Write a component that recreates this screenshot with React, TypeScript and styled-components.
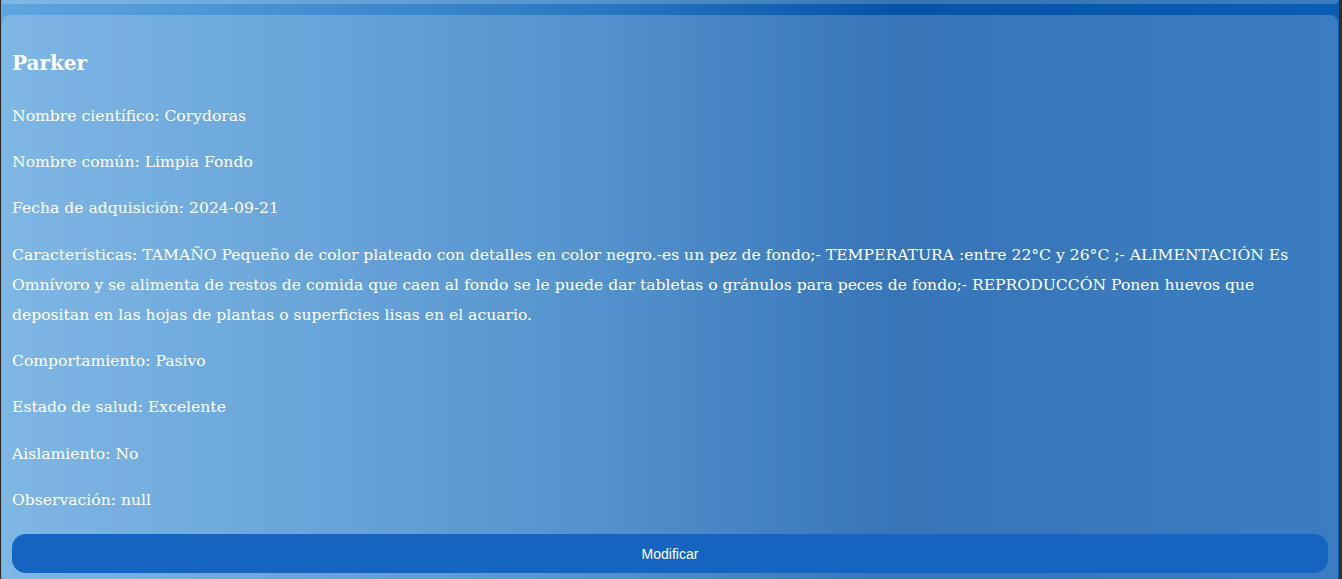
import React from "react";
import styled, { createGlobalStyle } from "styled-components";

const Global = createGlobalStyle`
  html, body { margin: 0; padding: 0; background: #2e2e2e; overflow: hidden; }
  body { font-family: "DejaVu Serif", Georgia, serif; }
`;

const Wrapper = styled.div`
  margin: 0 3px 0 1px;
  padding: 0 1px 0 1px;
  min-height: 579px;
  display: flex;
  flex-direction: column;
  gap: 11px;
  background: linear-gradient(90deg, #5fa5de 0%, #4690d2 22%, #2877c0 45%, #0553a6 67%, #0b5db2 100%);
`;

const Card = styled.section<{ $stub?: boolean }>`
  background: rgba(255, 255, 255, 0.2);
  border-radius: ${(p) => (p.$stub ? "0 0 8px 8px" : "8px")};
  height: ${(p) => (p.$stub ? "4px" : "auto")};
  padding: ${(p) => (p.$stub ? "0" : "36px 10px 12px 10px")};
  color: #fff;
`;

const Title = styled.h3`
  margin: 0 0 26px 0;
  font-size: 20px;
  line-height: 24px;
  font-weight: bold;
`;

const Field = styled.p`
  margin: 0 0 16px 0;
  font-size: 15.6px;
  line-height: 30.2px;
`;

const Button = styled.button`
  display: block;
  width: 100%;
  height: 39px;
  margin-top: 19px;
  border: none;
  border-radius: 14px;
  background: #1565c0;
  color: #fff;
  font-family: "Liberation Sans", Arial, sans-serif;
  font-size: 14px;
  cursor: pointer;
`;

const fields = [
  "Nombre científico: Corydoras",
  "Nombre común: Limpia Fondo",
  "Fecha de adquisición: 2024-09-21",
  "Características: TAMAÑO Pequeño de color plateado con detalles en color negro.-es un pez de fondo;- TEMPERATURA :entre 22°C y 26°C ;- ALIMENTACIÓN Es Omnívoro y se alimenta de restos de comida que caen al fondo se le puede dar tabletas o gránulos para peces de fondo;- REPRODUCCÓN Ponen huevos que depositan en las hojas de plantas o superficies lisas en el acuario.",
  "Comportamiento: Pasivo",
  "Estado de salud: Excelente",
  "Aislamiento: No",
  "Observación: null",
];

export default function App() {
  return (
    <>
      <Global />
      <Wrapper>
        <Card $stub />
        <Card>
          <Title>Parker</Title>
          {fields.map((f) => (
            <Field key={f}>{f}</Field>
          ))}
          <Button>Modificar</Button>
        </Card>
      </Wrapper>
    </>
  );
}
